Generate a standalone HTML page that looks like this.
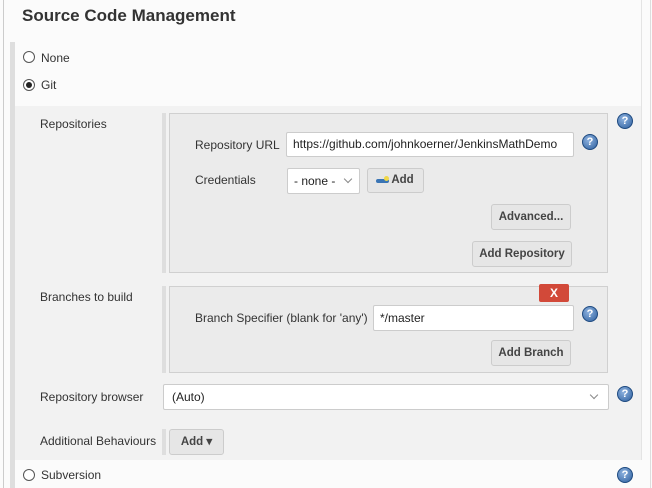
<!DOCTYPE html>
<html><head><style>
*{box-sizing:border-box;margin:0;padding:0}
body{width:652px;height:488px;overflow:hidden;background:#fbfbfb;font-family:"Liberation Sans",sans-serif;font-size:13px;color:#333;position:relative}
.a{position:absolute}
.lbl{position:absolute;font-size:12px;color:#333;line-height:16px}
.btn{position:absolute;background:#e6e6e6;border:1px solid #ccc;border-radius:3px;font-weight:bold;font-size:11.5px;color:#444;text-align:center}
.inp{position:absolute;background:#fff;border:1px solid #ccc;border-radius:2px;font-size:12px;color:#222;padding-left:6px;white-space:nowrap;overflow:hidden}
.help{position:absolute;width:16px;height:16px;border-radius:50%;background:radial-gradient(circle at 40% 35%,#8fb3e0,#2d5f9e);border:1px solid #1e4a80;color:#fff;font-weight:bold;font-size:11px;line-height:14px;text-align:center}
.radio{position:absolute;width:12px;height:12px;border:1px solid #555;border-radius:50%;background:#fff}
.bar{position:absolute;background:#dedede}
.box{position:absolute;background:#ebebeb;border:1px solid #d0d0d0}
.chev{position:absolute;width:6px;height:6px;border-right:1px solid #888;border-bottom:1px solid #888;transform:rotate(45deg)}
</style></head><body>
<div class="a" style="left:3px;top:0;width:1px;height:488px;background:#ccc"></div>
<div class="a" style="left:650px;top:0;width:1px;height:488px;background:#ddd"></div>
<div class="a" style="left:22px;top:6px;font-size:17px;font-weight:bold;color:#333">Source Code Management</div>
<div class="bar" style="left:10px;top:42px;width:5px;height:446px"></div>
<div class="radio" style="left:23px;top:51px"></div>
<div class="lbl" style="left:41px;top:50px">None</div>
<div class="radio" style="left:23px;top:79px"><div class="a" style="left:2px;top:2px;width:6px;height:6px;border-radius:50%;background:#222"></div></div>
<div class="lbl" style="left:41px;top:77px">Git</div>
<div class="a" style="left:15px;top:106px;width:626px;height:354px;background:#f2f2f2"></div>
<div class="a" style="left:641px;top:0;width:1px;height:460px;background:#e4e4e4"></div>
<div class="lbl" style="left:40px;top:116px">Repositories</div>
<div class="bar" style="left:162px;top:113px;width:4px;height:160px"></div>
<div class="box" style="left:169px;top:113px;width:439px;height:160px"></div>
<div class="help" style="left:617px;top:113px">?</div>
<div class="lbl" style="left:195px;top:137px">Repository URL</div>
<div class="inp" style="left:286px;top:132px;width:288px;height:25px;line-height:23px">https://github.com/johnkoerner/JenkinsMathDemo</div>
<div class="help" style="left:582px;top:134px">?</div>
<div class="lbl" style="left:195px;top:172px">Credentials</div>
<div class="inp" style="left:287px;top:168px;width:73px;height:26px;line-height:24px">- none -<span class="chev" style="left:57px;top:7px"></span></div>
<div class="btn" style="left:367px;top:168px;width:57px;height:25px;line-height:23px;padding-left:14px"><span class="a" style="left:8px;top:10px;width:13px;height:4px;background:#3a75b5;border-radius:2px"></span><span class="a" style="left:16px;top:7px;width:5px;height:5px;background:#f0d84a;border-radius:50%"></span>Add</div>
<div class="btn" style="left:491px;top:204px;width:80px;height:26px;line-height:24px">Advanced...</div>
<div class="btn" style="left:472px;top:241px;width:100px;height:26px;line-height:24px">Add Repository</div>
<div class="lbl" style="left:40px;top:289px">Branches to build</div>
<div class="bar" style="left:162px;top:286px;width:4px;height:87px"></div>
<div class="box" style="left:169px;top:286px;width:439px;height:87px"></div>
<div class="a" style="left:539px;top:284px;width:30px;height:18px;background:#d24939;border-radius:2px;color:#fff;font-weight:bold;font-size:12px;text-align:center;line-height:18px">X</div>
<div class="lbl" style="left:195px;top:310px">Branch Specifier (blank for 'any')</div>
<div class="inp" style="left:373px;top:305px;width:201px;height:26px;line-height:24px">*/master</div>
<div class="help" style="left:582px;top:306px">?</div>
<div class="btn" style="left:491px;top:340px;width:80px;height:26px;line-height:24px">Add Branch</div>
<div class="lbl" style="left:40px;top:389px">Repository browser</div>
<div class="inp" style="left:163px;top:384px;width:446px;height:26px;line-height:24px;padding-left:8px">(Auto)<span class="chev" style="left:427px;top:7px"></span></div>
<div class="help" style="left:617px;top:386px">?</div>
<div class="lbl" style="left:40px;top:433px">Additional Behaviours</div>
<div class="bar" style="left:162px;top:429px;width:4px;height:26px"></div>
<div class="btn" style="left:169px;top:429px;width:55px;height:26px;line-height:24px">Add &#9662;</div>
<div class="radio" style="left:23px;top:469px"></div>
<div class="lbl" style="left:41px;top:467px">Subversion</div>
<div class="help" style="left:617px;top:467px">?</div>
</body></html>
